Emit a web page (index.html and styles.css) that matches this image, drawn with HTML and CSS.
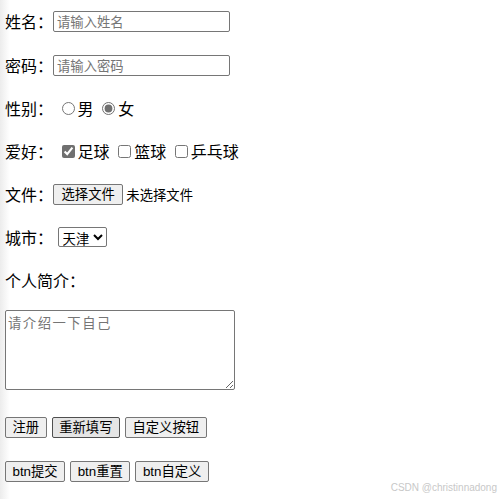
FILE: index.html
```html
<!DOCTYPE html>
<html lang="zh">
<head>
    <meta charset="UTF-8">
    <title>表单</title>
    <link rel="stylesheet" href="styles.css">
</head>
<body>
    <form class="form">
        <div class="row row-first">姓名：<input type="text" class="text-input" placeholder="请输入姓名"></div>
        <div class="row">密码：<input type="password" class="text-input" placeholder="请输入密码"></div>
        <div class="row">性别： <input type="radio" name="sex">男 <input type="radio" name="sex" checked>女</div>
        <div class="row">爱好： <input type="checkbox" checked>足球 <input type="checkbox">篮球 <input type="checkbox">乒乓球</div>
        <div class="row">文件：<button type="button" class="btn btn-file">选择文件</button><span class="file-name">未选择文件</span></div>
        <div class="row">城市： <select class="city"><option>天津</option><option>北京</option></select></div>
        <div class="row row-intro">个人简介：</div>
        <textarea class="intro" placeholder="请介绍一下自己"></textarea>
        <div class="row btn-row row-buttons">
            <button type="submit" class="btn">注册</button>
            <button type="reset" class="btn btn-hover">重新填写</button>
            <button type="button" class="btn">自定义按钮</button>
        </div>
        <div class="row btn-row">
            <button type="submit" class="btn">btn提交</button>
            <button type="reset" class="btn">btn重置</button>
            <button type="button" class="btn">btn自定义</button>
        </div>
    </form>
    <div class="watermark">CSDN @christinnadong</div>
</body>
</html>
```

FILE: styles.css
```css
html, body {
    height: 100%;
}

body {
    margin: 0;
    padding: 10px 0 0 5px;
    box-sizing: border-box;
    font-family: "Noto Sans CJK SC", "Liberation Sans", sans-serif;
    font-size: 16px;
    color: #000;
    background: linear-gradient(to right, #ececec, #fff 10px);
    position: relative;
    overflow: hidden;
}

.form {
    display: flex;
    flex-direction: column;
    align-items: flex-start;
}

.row {
    height: 22px;
    display: flex;
    align-items: center;
    white-space: pre;
    margin-bottom: 21px;
}

.row-first {
    margin-bottom: 22px;
}

.row-intro {
    margin-bottom: 19px;
}

.row input[type="radio"],
.row input[type="checkbox"] {
    width: 13px;
    height: 13px;
    margin: 1px 3px 0 5px;
    accent-color: #707070;
}

.text-input {
    box-sizing: border-box;
    width: 177px;
    height: 21px;
    margin: 0;
    padding: 1px 3px;
    border: 1px solid #767676;
    border-radius: 2px;
    font-family: "Noto Sans CJK SC", sans-serif;
    font-size: 13.33px;
    line-height: 17px;
}

.text-input::placeholder {
    color: #757575;
}

.btn {
    box-sizing: border-box;
    height: 21px;
    margin: 0;
    padding: 1px 6.5px;
    border: 1px solid #767676;
    border-radius: 2px;
    background: #efefef;
    font-family: "Liberation Sans", "Noto Sans CJK SC", sans-serif;
    font-size: 13.33px;
    line-height: 17px;
    color: #000;
}

.btn-file {
    padding: 1px 7.5px;
}

.btn-hover {
    background: #e5e5e5;
    border-color: #4f4f4f;
}

.file-name {
    font-size: 13.33px;
    margin-left: 3px;
}

.city {
    box-sizing: border-box;
    width: 49px;
    height: 20px;
    margin: 0 0 0 1px;
    padding: 0;
    border: 1px solid #767676;
    border-radius: 2px;
    background: #fff;
    font-family: "Noto Sans CJK SC", sans-serif;
    font-size: 13.33px;
}

.intro {
    box-sizing: border-box;
    width: 230px;
    height: 80px;
    margin: 0;
    padding: 2px;
    border: 1px solid #767676;
    border-radius: 2px;
    font-family: "Liberation Mono", "Noto Sans CJK SC", monospace;
    font-size: 13.33px;
    letter-spacing: 1.5px;
    resize: both;
}

.intro::placeholder {
    color: #757575;
}

.btn-row {
    gap: 5px;
    margin-bottom: 22px;
}

.row-buttons {
    margin-top: 26px;
}

.watermark {
    position: absolute;
    right: 4px;
    bottom: 6px;
    font-family: "Liberation Sans", sans-serif;
    font-size: 10px;
    color: #c8c8c8;
}
```
